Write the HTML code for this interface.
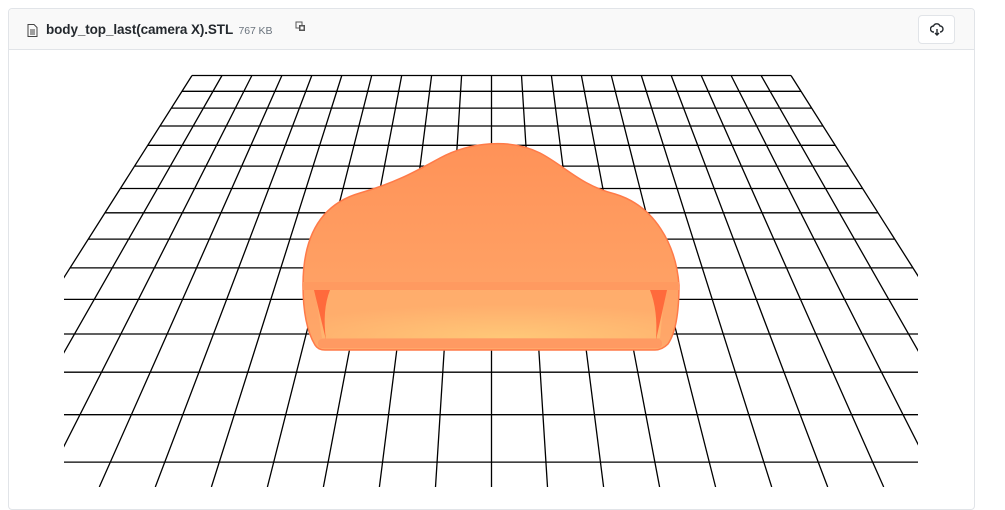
<!DOCTYPE html>
<html><head><meta charset="utf-8"><style>
html,body{margin:0;padding:0;background:#fff;width:1005px;height:487px;overflow:hidden;font-family:"Liberation Sans",sans-serif}
.box{position:absolute;left:8px;top:8px;width:965px;height:500px;border:1px solid #e1e4e8;border-radius:4px}
.hdr{position:absolute;left:0;top:0;width:965px;height:40px;background:#f9f9f9;border-bottom:1px solid #e1e4e8;border-radius:4px 4px 0 0}
.name{position:absolute;left:37px;top:13px;font-size:13.5px;font-weight:bold;color:#24292e;letter-spacing:-0.1px}
.kb{font-size:10.5px;font-weight:normal;color:#6a737d;margin-left:2px}
.btn{position:absolute;left:909px;top:6px;width:35px;height:27px;border:1px solid #e1e4e8;border-radius:4px;background:#fff}
</style></head><body>
<div class="box"><div class="hdr">
<svg style="position:absolute;left:18px;top:15px" width="11" height="13" viewBox="0 0 11 13"><path d="M1 .5h6l3 3v9H1z" fill="none" stroke="#444"/><path d="M3 6h5M3 8h5M3 10h5" stroke="#444"/></svg>
<div class="name">body_top_last(camera X).STL <span class="kb">767 KB</span></div>
<svg style="position:absolute;left:286px;top:12px" width="11" height="11" viewBox="0 0 11 11"><rect x="1" y="1" width="6" height="6" fill="none" stroke="#555"/><rect x="4" y="4" width="6" height="6" fill="#555"/><rect x="5.5" y="5.5" width="3" height="3" fill="#fff"/></svg>
<div class="btn"><svg style="position:absolute;left:11px;top:7px" width="14" height="13" viewBox="0 0 14 13"><path d="M4 9H3.5a3 3 0 0 1 0-6 3.5 3.5 0 0 1 6.5 0 3 3 0 0 1 0 6H10" fill="none" stroke="#24292e" stroke-width="1.4"/><path d="M7 6v6M5 10l2 2 2-2" fill="none" stroke="#24292e" stroke-width="1.4"/></svg></div>
</div></div>
<svg style="position:absolute;left:0;top:0" width="1005" height="487">
<defs><clipPath id="c"><rect x="64" y="50" width="854" height="437"/></clipPath>
<linearGradient id="g1" x1="0" y1="0" x2="0" y2="1"><stop offset="0" stop-color="#ff9258"/><stop offset="1" stop-color="#ffa86a"/></linearGradient>
<radialGradient id="g2" cx="0.55" cy="1" r="0.7"><stop offset="0" stop-color="#ffc878"/><stop offset="1" stop-color="#ffad6c"/></radialGradient></defs>
<g clip-path="url(#c)" stroke="#000" stroke-width="1.3" fill="none">
<path d="M192 75.5L-68.8 487M222 75.5L-12.8 487M251.9 75.5L43.3 487M281.9 75.5L99.3 487M311.8 75.5L155.3 487M341.8 75.5L211.4 487M371.7 75.5L267.4 487M401.7 75.5L323.4 487M431.6 75.5L379.4 487M461.6 75.5L435.5 487M491.5 75.5L491.5 487M521.5 75.5L547.5 487M551.4 75.5L603.6 487M581.4 75.5L659.6 487M611.3 75.5L715.6 487M641.3 75.5L771.7 487M671.2 75.5L827.7 487M701.2 75.5L883.7 487M731.1 75.5L939.7 487M761.1 75.5L995.8 487M791 75.5L1051.8 487"/>
<path d="M192 75.5H791M182 91.3H801M171 108.1H812M160 126H823M148 145.3H835M135 166.1H848M120 188.5H863M105 212.8H878M88 239.1H895M70 267.9H913M50 299.4H933M28 334H955M4 372.2H979M-23 414.7H1006M-60 462.1H1040"/>
</g>
<path d="M315 345Q303 325 303 285C303 240 318 205 360 193C398 182 418 170 440 158C470 142 510 138 540 153C565 166 580 185 615 194C655 206 676 245 679 285Q679 328 668 344Q662 350 655 350L325 350Q318 350 315 345Z" fill="url(#g1)" stroke="#ff7a48" stroke-width="1.5"/>
<rect x="303" y="282" width="376" height="8" fill="#ff9a60"/>
<path d="M315 290H665L660 338H322Z" fill="url(#g2)"/>
<path d="M314 290H330Q322 310 326 340Z" fill="#ff6a3c"/>
<path d="M667 290H650Q658 310 656 340Z" fill="#ff6a3c"/>
<rect x="318" y="339" width="344" height="9" rx="4" fill="#ff9a62"/>
</svg>
</body></html>
